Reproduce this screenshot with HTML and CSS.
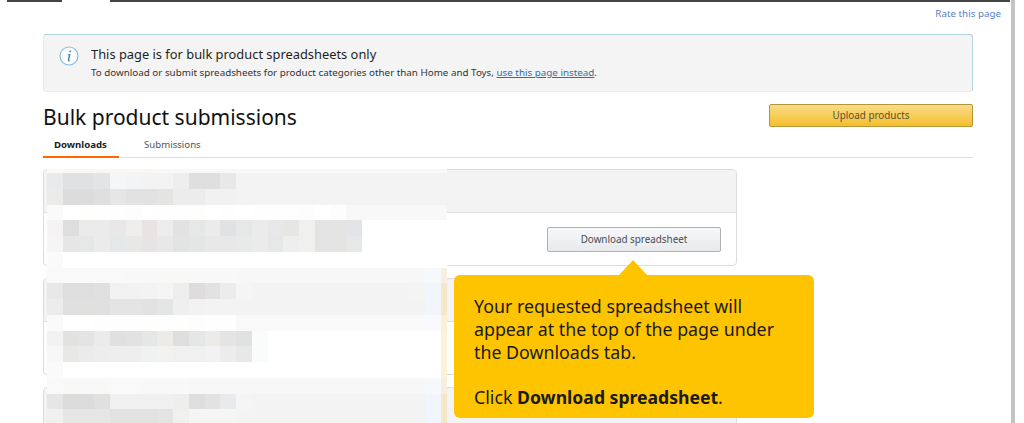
FILE: index.html
```html
<!DOCTYPE html>
<html lang="en">
<head>
<meta charset="utf-8">
<title>Bulk product submissions</title>
<link rel="stylesheet" href="styles.css">
</head>
<body>
<div class="viewport">
  <div class="topbar"><span class="seg seg-a"></span><span class="seg seg-b"></span></div>
  <div class="rate"><a href="#">Rate this page</a></div>
  <main class="page">
    <section class="alert">
      <svg class="alert-icon" width="20" height="20" viewBox="0 0 20 20" aria-hidden="true">
        <circle cx="10" cy="10" r="9" fill="#fff" stroke="#8cc0d8" stroke-width="1.2"/>
        <path d="M10.6 4.6h1.6l-.3 1.7h-1.6zM9.9 7.9h1.6l-1.2 6.1c-.1.5.1.6.7.4l-.2.8c-1.400.6-2.300.1-2-1.200l.9-4.900c0-.4-.3-.5-.9-.4l.1-.6z" fill="#3f88b0"/>
      </svg>
      <div class="alert-body">
        <h4 class="alert-title">This page is for bulk product spreadsheets only</h4>
        <p class="alert-text">To download or submit spreadsheets for product categories other than Home and Toys, <a href="#">use this page instead</a>.</p>
      </div>
    </section>
    <header class="head">
      <h1 class="title">Bulk product submissions</h1>
      <button class="btn btn-primary" type="button">Upload products</button>
    </header>
    <nav class="tabs">
      <a class="tab tab-active" href="#">Downloads</a>
      <a class="tab" href="#">Submissions</a>
    </nav>
    <div class="cards">
      <article class="card">
        <div class="card-head"></div>
        <div class="card-body"><button class="btn btn-secondary" type="button">Download spreadsheet</button></div>
      </article>
      <article class="card">
        <div class="card-head"></div>
        <div class="card-body"></div>
      </article>
      <article class="card">
        <div class="card-head"></div>
        <div class="card-body"></div>
      </article>
    </div>
  </main>
  <div class="mosaic" id="mosaic"></div>
  <aside class="tip">
    <span class="tip-caret"></span>
    <p>Your requested spreadsheet will appear at the top of the page under the Downloads tab.</p>
    <p>Click <strong>Download spreadsheet</strong>.</p>
  </aside>
  <div class="scrollbar"></div>
</div>
<script src="mosaic.js"></script>
</body>
</html>
```

FILE: styles.css
```css
* { box-sizing: border-box; }
html, body { margin: 0; height: 100%; background: #fff; }
body { font-family: "Noto Sans", sans-serif; color: #111; }
a { text-decoration: none; }
.viewport { position: relative; width: 1024px; height: 423px; overflow: hidden; }
.topbar { display: flex; height: 2px; padding-left: 7px; padding-right: 14px; gap: 48px; }
.seg { display: block; height: 2px; background: #444; }
.seg-a { width: 55px; }
.seg-b { flex: 1; }
.rate { display: flex; justify-content: flex-end; height: 32px; padding: 5px 23px 0 0; font-size: 9.800px; line-height: 13px; }
.rate a { color: #5b7fc4; }
.page { width: 930px; margin-left: 43px; }
.alert { display: flex; height: 58px; padding: 11px 16px; gap: 12px; background: #f4f4f4; border: 1px solid #b0d6e4; border-left-color: #e4eef2; border-bottom-color: #e6eef2; border-radius: 3px; }
.alert-icon { flex: none; margin-left: -1px; }
.alert-body { flex: 1; }
.alert-title { margin: 0; font-size: 12.870px; line-height: 17px; font-weight: 400; color: #1f1f1f; }
.alert-text { margin: 3px 0 0; font-size: 9.820px; line-height: 13px; color: #333; }
.alert-text a { color: #2f6fa8; text-decoration: underline; }
.head { display: flex; justify-content: space-between; align-items: flex-start; height: 30px; margin-top: 12px; }
.title { margin: 0; font-size: 21px; line-height: 26px; font-weight: 400; color: #111; }
.btn { display: block; font: inherit; font-size: 9.850px; line-height: 13px; border-radius: 2px; cursor: pointer; padding: 0; }
.btn-primary { width: 204px; height: 23px; color: #55502a; background: linear-gradient(#fadb8a, #f5bf2e); border: 1px solid #b9953a; }
.tabs { display: flex; height: 24px; border-bottom: 1px solid #ddd; }
.tab { display: block; height: 24px; font-size: 9.650px; line-height: 14px; padding: 4px 11px 0; color: #555; }
.tab + .tab { margin-left: 14px; }
.tab-active { width: 76px; font-weight: 700; color: #222; border-bottom: 2px solid #f60; }
.cards { display: flex; flex-direction: column; gap: 12px; width: 694px; margin-top: 11px; }
.card { flex: none; height: 97px; border: 1px solid #ddd; border-radius: 4px; overflow: hidden; background: #fff; }
.card-head { height: 43px; background: #f3f3f3; border-bottom: 1px solid #ddd; }
.card-body { display: flex; justify-content: flex-end; padding: 14px 15px 0 0; }
.btn-secondary { width: 174px; height: 25px; color: #444c58; background: linear-gradient(#f7f8fa, #e7e9ec); border: 1px solid #adb1b8; }
.mosaic { position: absolute; left: 47px; top: 169px; width: 400px; height: 254px; }
.mosaic svg { display: block; }
.tip { position: absolute; left: 454px; top: 275px; width: 360px; height: 143px; padding: 20px; background: #ffc400; border-radius: 6px; font-size: 17.800px; line-height: 23px; color: #1a1a1a; }
.tip p { margin: 0 0 22px; }
.tip p:last-child { margin-bottom: 0; }
.tip strong { font-size: 17.600px; }
.tip-caret { position: absolute; left: 165px; top: -15px; width: 0; height: 0; border-left: 14px solid transparent; border-right: 14px solid transparent; border-bottom: 15px solid #ffc400; }
.scrollbar { position: absolute; left: 1011px; top: 0; width: 4px; height: 423px; background: #c4c4c4; }
```

FILE: mosaic.js
```js
// Blurred-out (pixelated) card content: one row of tones per line, 15.75px per cell.
var TOP = [4, 15.75, 15.75, 15.75, 15.75, 15.75, 15.75, 15.75, 15.75, 15.75, 15.75, 15.75, 15.75, 15.75, 15.75, 15.75, 15.75];
var CELL = 15.75;
function fill(list, n, tail) { var out = list.slice(); while (out.length < n) out.push(tail); return out; }
var ROWS = [
  fill(['fdf6f1','fdf5f0','fdf5f0','fdf5f0','fdf5f0','fdf5f0','fbf6f3','f9f8f8'], 26, 'f8f8f8'),
  fill(['e8eaec','e0e1e2','e0e1e2','e2e4e6','f4f6f8','f3f4f5','f3f3f3','f3f3f3','eeeeee','dfdfdf','dfdfdf','e8e8e8','f3f3f3'], 26, 'f3f3f3'),
  fill(['ebebe9','dcdcdc','dcdcdc','dfdfdf','e6e6e6','e2e2e2','e2e2e2','e4e4e2','ececec','ececec','f1f1f1','f1f1f1','f3f3f3'], 26, 'f3f3f3'),
  fill(['fafafa','ffffff','fefefc','fefefe','fefefe','fdfdfd','ffffff','fefefe','fefefe','fefefc','ffffff','fefefe','ffffff','fefefe','fefefe','fefefe','fdfdfd','ffffff','fdfdfd'], 26, 'f8f8f8'),
  fill(['f5f3f3','dedede','ebebeb','ebebeb','e8e8e8','efeeec','e8e4e4','ededed','e2e2e2','e6e8e8','ebebeb','e0e2e4','e6e8e8','ebebeb','e8e8ea','e6e6e4','f0f0ee','e4e4e4','e4e4e4','e2e4e8'], 26, 'ffffff'),
  fill(['f5f5f5','e6e6e6','e6e8e8','ebebeb','e4e8e8','e8e8e6','e6e4e4','e8e8e8','e2e4e4','e4e6e6','e8e8e8','e8e8e8','e8eaea','ebebeb','e6e8e8','eeeeee','f0f0ee','e4e4e4','e4e4e2','e6e8e8'], 26, 'ffffff'),
  fill(['fafafa'], 26, 'ffffff'),
  fill(['f9f9f9','f9f9f9','f9f9f9','f9f9f9','f9f9f9','f8f8f8','f8f8f8','f8f8f6','f8f8f6','f8f8f8','f8f8f8','f8f8f8','f7f7f7','f7f7f7','f7f7f7','f7f7f7','f7f7f7','f7f7f7','f7f7f7','f7f7f7','f7f7f7','f7f7f7','f7f7f7','f7f7f7','f7f8fc','f5f0e2'], 26, 'f7f7f7'),
  fill(['e8e8e8','dedede','dedede','e0e0e0','f2f2f2','f2f2f2','f3f3f3','f5f5f5','eeeeee','dedcdc','e2e2e2','ececec','f5f5f5','f3f3f3','f3f3f3','f3f3f3','f3f3f3','f3f3f3','f3f3f3','f3f3f3','f3f3f3','f3f3f3','f3f3f3','f4f4f2','f3f5fc','f5e8c8'], 26, 'f3f3f3'),
  fill(['ececec','e0e0e0','e0e0de','e0e0e0','e4e4e4','e4e4e4','e2e2e2','e4e6e6','efefef','f2f2f2','f3f3f3','f3f3f3','f3f3f3','f3f3f3','f3f3f3','f3f3f3','f3f3f3','f3f3f3','f3f3f3','f3f3f3','f3f3f3','f3f3f3','f3f3f3','f3f3f3','f3f5fc','f5e8c8'], 26, 'f3f3f3'),
  fill(['fafafa','ffffff','ffffff','fefefe','fefefe','fefefe','fefefc','fefefe','fefefc','fcfdfc','fefefe','fefefe','f9f9f9','f9f9f9','f9f9f9','f9f9f9','f9f9f9','f9f9f9','f9f9f9','f9f9f9','f9f9f9','f9f9f9','f9f9f9','f9f9f9','fafafe','fbf0d5'], 26, 'f9f9f9'),
  fill(['f2f2f2','e2e2e0','e4e4e4','ebebeb','e0e0e0','e2e2e2','e4e6e8','ecebe8','dedede','e4e6e8','ecebe8','e4e4e4','e0e2e2','fafbfb','ffffff','ffffff','ffffff','ffffff','ffffff','ffffff','ffffff','ffffff','ffffff','ffffff','ffffff','fcf2d8'], 26, 'ffffff'),
  fill(['f7f7f7','e8e8e6','ebebeb','ededed','eeeeee','eeeeee','f0f2f2','f2f2ee','f0f0f0','f0f0f0','f2f2f2','ececec','e8e8e8','fafbfb','ffffff','ffffff','ffffff','ffffff','ffffff','ffffff','ffffff','ffffff','ffffff','ffffff','ffffff','fcf2d8'], 26, 'ffffff'),
  fill(['fafafa','ffffff','ffffff','ffffff','ffffff','ffffff','ffffff','ffffff','ffffff','ffffff','ffffff','ffffff','ffffff','ffffff','ffffff','ffffff','ffffff','ffffff','ffffff','ffffff','ffffff','ffffff','ffffff','ffffff','ffffff','fcf2d8'], 26, 'ffffff'),
  fill(['f9f9f9','f8f8f6','f8f8f8','f8f8f6','f9f9f9','f9f9f9','f8f8f8','f8f8f8','f8f8f8','f7f7f7','f7f7f7','f7f7f7','f7f7f7','f7f7f7','f7f7f7','f7f7f7','f7f7f7','f7f7f7','f7f7f7','f7f7f7','f7f7f7','f7f7f7','f7f7f7','f7f7f7','f7f8fc','f5efdf'], 26, 'f7f7f7'),
  fill(['e6e6e6','dcdcdc','dcdcdc','e0e0e0','f0f0f0','f0f0f0','f0f0f0','f0f0f0','eeeeec','dedede','e2e2e2','e8eaee','f5f5f5','f3f3f3','f3f3f3','f3f3f3','f3f3f3','f3f3f3','f3f3f3','f3f3f3','f3f3f3','f3f3f3','f3f3f3','f3f3f3','f3f5fc','f5e8c8'], 26, 'f3f3f3'),
  fill(['f0f0ee','e6e6e6','e6e6e6','e6e6e6','e2e2e2','e2e2e2','e2e2e2','e4e4e4','f0f0f0','f5f5f5','f5f5f5','f5f5f5','f3f3f3','f3f3f3','f3f3f3','f3f3f3','f3f3f3','f3f3f3','f3f3f3','f3f3f3','f3f3f3','f3f3f3','f3f3f3','f3f3f3','f3f5fc','f5e8c8'], 26, 'f3f3f3')
];
var NS = 'http://www.w3.org/2000/svg';
var svg = document.createElementNS(NS, 'svg');
svg.setAttribute('width', '400');
svg.setAttribute('height', '254');
svg.setAttribute('shape-rendering', 'crispEdges');
var y = 0;
ROWS.forEach(function (row, r) {
  row.forEach(function (tone, c) {
    var rect = document.createElementNS(NS, 'rect');
    rect.setAttribute('x', c * CELL);
    rect.setAttribute('y', y);
    rect.setAttribute('width', CELL);
    rect.setAttribute('height', TOP[r]);
    rect.setAttribute('fill', '#' + tone);
    svg.appendChild(rect);
  });
  y += TOP[r];
});
document.getElementById('mosaic').appendChild(svg);
```
